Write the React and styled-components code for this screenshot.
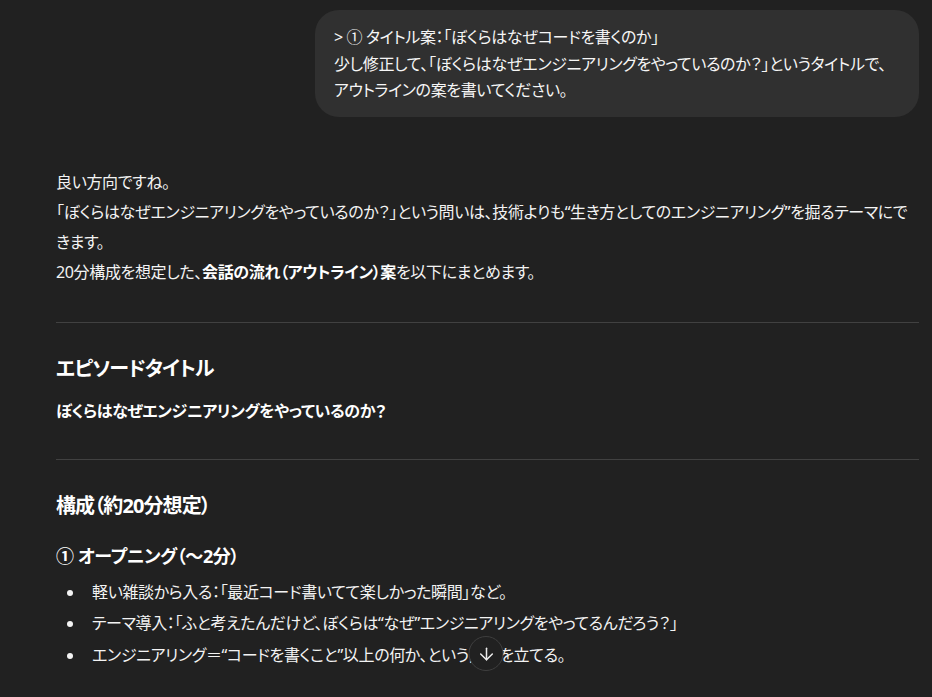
import styled, { createGlobalStyle } from "styled-components";
import { ArrowDown } from "lucide-react";

const GlobalStyle = createGlobalStyle`
  html, body {
    margin: 0;
    padding: 0;
    background: #212121;
  }
  body {
    font-family: "Noto Sans", "Noto Sans CJK JP", sans-serif;
    font-feature-settings: "palt";
    letter-spacing: -0.35px;
    color: #f3f3f3;
    font-size: 16px;
    overflow: hidden;
  }
`

const Thread = styled.main`
  height: 697px;
  padding: 10px 13px 0 56px;
  box-sizing: border-box;
  display: flex;
  flex-direction: column;
`
const UserBubble = styled.div`
  align-self: flex-end;
  max-width: 70%;
  box-sizing: border-box;
  padding: 14px 20px 13px 19px;
  background: #303030;
  border-radius: 24px;
  line-height: 26.5px;
  color: #f6f6f6;
`
const Answer = styled.article`
  margin-top: 50px;
`
const Para = styled.p`
  margin: 0;
  line-height: 30px;
  & strong{
    font-weight: 700;
    color: #fff;
  }
`
const Rule = styled.hr`
  border: none;
  border-top: 1px solid #414141;
  margin: ${props=>props.top}px 0 0;
`
const Heading = styled.h2`
  margin: 32px 0 0;
  font-size: 20px;
  line-height: 28px;
  font-weight: 700;
  letter-spacing: -0.9px;
  color: #fff;
`
const Lead = styled.p`
  margin: 14px 0 0;
  line-height: 28px;
  font-weight: 700;
  color: #fff;
`
const SubHeading = styled.h3`
  margin: 23px 0 0;
  font-size: 18px;
  line-height: 26px;
  font-weight: 700;
  letter-spacing: -0.4px;
  color: #fff;
`
const List = styled.ul`
  margin: 9px 0 0;
  padding: 0;
  list-style: none;
`
const Item = styled.li`
  position: relative;
  padding-left: 36px;
  line-height: 28px;
  margin-bottom: 3.5px;
  &::before{
    content: "";
    position: absolute;
    left: 11px;
    top: 12px;
    width: 6px;
    height: 6px;
    border-radius: 50%;
    background: #f3f3f3;
  }
`
const ScrollDown = styled.button`
  position: fixed;
  left: 486px;
  bottom: 26px;
  transform: translateX(-50%);
  width: 35px;
  height: 35px;
  padding: 0;
  border-radius: 50%;
  border: 1px solid #3f3f3f;
  background: #212121;
  color: #ececec;
  display: flex;
  align-items: center;
  justify-content: center;
`

export default function App(){
  return(
    <>
      <GlobalStyle />
      <Thread>
        <UserBubble>
          &gt; ① タイトル案：「ぼくらはなぜコードを書くのか」<br />
          少し修正して、「ぼくらはなぜエンジニアリングをやっているのか？」というタイトルで、アウトラインの案を書いてください。
        </UserBubble>
        <Answer>
          <Para>
            良い方向ですね。<br />
            「ぼくらはなぜエンジニアリングをやっているのか？」という問いは、技術よりも“生き方としてのエンジニアリング”を掘るテーマにできます。<br />
            20分構成を想定した、<strong>会話の流れ（アウトライン）案</strong>を以下にまとめます。
          </Para>
          <Rule top={35} />
          <Heading>エピソードタイトル</Heading>
          <Lead>ぼくらはなぜエンジニアリングをやっているのか？</Lead>
          <Rule top={34} />
          <Heading>構成（約20分想定）</Heading>
          <SubHeading>① オープニング（〜2分）</SubHeading>
          <List>
            <Item>軽い雑談から入る：「最近コード書いてて楽しかった瞬間」など。</Item>
            <Item>テーマ導入：「ふと考えたんだけど、ぼくらは“なぜ”エンジニアリングをやってるんだろう？」</Item>
            <Item>エンジニアリング＝“コードを書くこと”以上の何か、という問いを立てる。</Item>
          </List>
        </Answer>
      </Thread>
      <ScrollDown aria-label="scroll down">
        <ArrowDown size={20} strokeWidth={1.8} />
      </ScrollDown>
    </>
  )
}
